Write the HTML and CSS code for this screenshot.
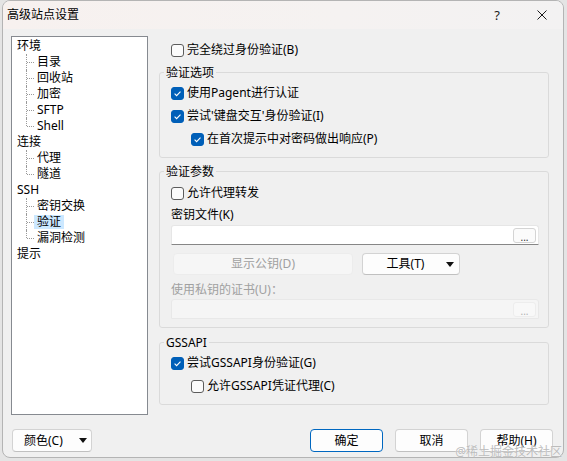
FILE: index.html
```html
<!DOCTYPE html>
<html lang="zh-CN">
<head>
<meta charset="utf-8">
<title>高级站点设置</title>
<link rel="stylesheet" href="styles.css">
</head>
<body>
<div class="dialog">
  <div class="titlebar">
    <span class="title">高级站点设置</span>
    <span class="tb-help">?</span>
    <span class="tb-close"><svg width="10" height="10" viewBox="0 0 10 10"><path d="M0.5 0.5 L9.5 9.5 M9.5 0.5 L0.5 9.5" stroke="#1a1a1a" stroke-width="1" fill="none"/></svg></span>
  </div>
  <div class="main">
    <div class="tree">
      <div class="node">环境</div>
      <div class="child"><span class="branch"></span><span class="label">目录</span></div>
      <div class="child"><span class="branch"></span><span class="label">回收站</span></div>
      <div class="child"><span class="branch"></span><span class="label">加密</span></div>
      <div class="child"><span class="branch"></span><span class="label">SFTP</span></div>
      <div class="child last"><span class="branch"></span><span class="label">Shell</span></div>
      <div class="node">连接</div>
      <div class="child"><span class="branch"></span><span class="label">代理</span></div>
      <div class="child last"><span class="branch"></span><span class="label">隧道</span></div>
      <div class="node">SSH</div>
      <div class="child"><span class="branch"></span><span class="label">密钥交换</span></div>
      <div class="child"><span class="branch"></span><span class="label selected">验证</span></div>
      <div class="child last"><span class="branch"></span><span class="label">漏洞检测</span></div>
      <div class="node">提示</div>
    </div>
    <div class="panel">
      <div class="row top-row"><span class="cb"></span><span>完全绕过身份验证(B)</span></div>

      <div class="group g1">
        <div class="group-title">验证选项</div>
        <div class="row first"><span class="cb on"><svg width="13" height="13" viewBox="0 0 13 13"><path d="M3.6 6.7 L5.6 8.7 L9.5 4.6" stroke="#fff" stroke-width="1.1" fill="none"/></svg></span><span>使用Pagent进行认证</span></div>
        <div class="row"><span class="cb on"><svg width="13" height="13" viewBox="0 0 13 13"><path d="M3.6 6.7 L5.6 8.7 L9.5 4.6" stroke="#fff" stroke-width="1.1" fill="none"/></svg></span><span>尝试'键盘交互'身份验证(I)</span></div>
        <div class="row indent"><span class="cb on"><svg width="13" height="13" viewBox="0 0 13 13"><path d="M3.6 6.7 L5.6 8.7 L9.5 4.6" stroke="#fff" stroke-width="1.1" fill="none"/></svg></span><span>在首次提示中对密码做出响应(P)</span></div>
      </div>

      <div class="group g2">
        <div class="group-title">验证参数</div>
        <div class="row r-agent"><span class="cb"></span><span>允许代理转发</span></div>
        <div class="row r-key">密钥文件(K)</div>
        <div class="input"><span class="browse">...</span></div>
        <div class="btn-row">
          <div class="btn disabled wide">显示公钥(D)</div>
          <div class="btn tools"><span class="btn-text">工具(T)</span><span class="arrow"></span></div>
        </div>
        <div class="row r-cert disabled-text">使用私钥的证书(U)：</div>
        <div class="input off"><span class="browse">...</span></div>
      </div>

      <div class="group g3">
        <div class="group-title">GSSAPI</div>
        <div class="row first"><span class="cb on"><svg width="13" height="13" viewBox="0 0 13 13"><path d="M3.6 6.7 L5.6 8.7 L9.5 4.6" stroke="#fff" stroke-width="1.1" fill="none"/></svg></span><span>尝试GSSAPI身份验证(G)</span></div>
        <div class="row indent"><span class="cb"></span><span>允许GSSAPI凭证代理(C)</span></div>
      </div>
    </div>
  </div>
  <div class="footer">
    <div class="btn color-btn"><span>颜色(C)</span><span class="arrow"></span></div>
    <div class="spacer"></div>
    <div class="btn action default">确定</div>
    <div class="btn action">取消</div>
    <div class="btn action">帮助(H)</div>
  </div>
</div>
<div class="watermark">@稀土掘金技术社区</div>
</body>
</html>
```

FILE: styles.css
```css
* { box-sizing: border-box; }
html, body { margin: 0; padding: 0; }
body {
  width: 567px;
  height: 461px;
  overflow: hidden;
  position: relative;
  background: #e4e4e4;
  font-family: "Noto Sans", "Noto Sans CJK SC", sans-serif;
  font-size: 12px;
  color: #000;
}
.dialog {
  width: 562px;
  height: 458px;
  margin-left: 2px;
  border: 1px solid #b4b4b4;
  border-radius: 8px;
  background: #f0f0f0;
  overflow: hidden;
  display: flex;
  flex-direction: column;
}
.titlebar {
  height: 28px;
  flex: none;
  display: flex;
  align-items: center;
  padding-left: 4px;
  background: linear-gradient(90deg, #f7f1ef 0%, #f5f2f1 60%, #f3f2f2 100%);
}
.title { flex: 1; font-size: 12px; line-height: 16px; }
.tb-help { width: 20px; text-align: center; font-size: 13px; color: #1a1a1a; }
.tb-close { width: 10px; height: 10px; margin-left: 30px; margin-right: 16px; display: flex; }

.main {
  display: flex;
  padding: 7px 0 0 8px;
  flex: none;
}
.tree {
  width: 137px;
  height: 379px;
  border: 1px solid #868a90;
  background: #fff;
  padding: 1px 0 0 5px;
  line-height: 16px;
}
.node { height: 16px; }
.child { height: 16px; display: flex; align-items: center; padding-left: 9px; }
.branch {
  width: 8px;
  height: 16px;
  border-left: 1px dotted #9a9a9a;
  position: relative;
  align-self: flex-start;
}
.child.last .branch { height: 8px; }
.branch::after {
  content: "";
  position: absolute;
  left: 0;
  top: 8px;
  width: 7px;
  border-top: 1px dotted #9a9a9a;
}
.label { padding: 0 3px; height: 14px; line-height: 14px; }
.label.selected { background: #cce8ff; }

.panel {
  width: 390px;
  margin-left: 11px;
  padding-top: 6px;
}
.row {
  height: 16px;
  line-height: 16px;
  display: flex;
  align-items: center;
  margin-top: 7px;
  white-space: nowrap;
}
.top-row { margin-top: 0; padding-left: 12px; }
.row.first { margin-top: 4px; }
.row.indent { padding-left: 20px; }

.cb {
  width: 13px;
  height: 13px;
  flex: none;
  border: 1px solid #5c5c5c;
  border-radius: 3px;
  background: #fbfbfb;
  margin-right: 3px;
  display: flex;
}
.cb.on { background: #005fb8; border-color: #005fb8; }
.cb.on svg { margin: -1px; }

.group {
  margin-top: 14px;
  border: 1px solid #dadada;
  border-radius: 3px;
  padding: 0 0 10px 11px;
}
.group-title {
  width: fit-content;
  margin: -8px 0 0 -7px;
  padding: 0 2px;
  height: 16px;
  line-height: 16px;
  background: #f0f0f0;
}
.g2 { margin-top: 13px; padding-bottom: 8px; }
.r-agent { margin-top: 5px; }
.r-key { margin-top: 6px; }
.r-cert { margin-top: 7px; }
.disabled-text { color: #a0a0a0; }

.input {
  width: 368px;
  height: 20px;
  margin-top: 2px;
  background: #fff;
  border: 1px solid #e6e6e6;
  border-bottom-color: #868686;
  border-radius: 3px 3px 0 0;
  display: flex;
  justify-content: flex-end;
  align-items: center;
  padding-right: 2px;
}
.input.off {
  margin-top: 1px;
  background: #f5f5f5;
  border-color: #e8e8e8;
}
.browse {
  width: 23px;
  height: 15px;
  border: 1px solid #d4d4d4;
  border-radius: 3px;
  background: #fbfbfb;
  font-size: 10px;
  line-height: 17px;
  text-align: center;
  color: #333;
  letter-spacing: 0;
}
.input.off .browse { border-color: #ededed; background: #f8f8f8; color: #b0b0b0; }

.btn-row {
  display: flex;
  margin-top: 8px;
  margin-left: 2px;
  gap: 9px;
}
.btn {
  height: 22px;
  line-height: 20px;
  border: 1px solid #d3d3d3;
  border-bottom-color: #c0c0c0;
  border-radius: 4px;
  background: #fdfdfd;
  text-align: center;
  white-space: nowrap;
}
.btn.wide { width: 180px; }
.btn.disabled {
  background: #f6f6f6;
  border-color: #ececec;
  color: #a0a0a0;
}
.btn.tools {
  width: 98px;
  display: flex;
  align-items: center;
  padding-right: 5px;
}
.btn-text { flex: 1; text-align: center; padding-left: 2px; }
.arrow {
  width: 0;
  height: 0;
  border-left: 4.5px solid transparent;
  border-right: 4.5px solid transparent;
  border-top: 5px solid #111;
}

.footer {
  display: flex;
  margin-top: 14px;
  padding: 0 10px 0 9px;
  gap: 12px;
}
.footer .btn { height: 23px; line-height: 21px; }
.color-btn {
  width: 80px;
  display: flex;
  align-items: center;
  justify-content: space-between;
  padding: 0 4px 0 11px;
}
.spacer { flex: 1; }
.btn.action { width: 73px; }
.btn.default { border-color: #0067c0; }

.watermark {
  position: absolute;
  right: 5px;
  bottom: 2px;
  font-size: 12px;
  line-height: 14px;
  color: #bcbcbc;
  text-shadow: 0 0 1px #fff;
}
```
